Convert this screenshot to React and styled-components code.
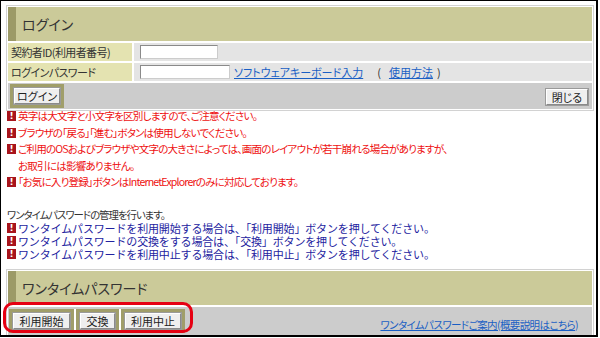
import React from 'react';
import styled, { createGlobalStyle } from 'styled-components';

const GlobalStyle = createGlobalStyle`
  html, body {
    margin: 0;
    padding: 0;
    background: #fff;
  }
  body {
    font-family: "Noto Sans CJK JP", "DejaVu Sans", sans-serif;
    color: #333;
  }
`;

const Frame = styled.div`
  width: 598px;
  height: 337px;
  box-sizing: border-box;
  border: 1px solid #000;
  border-right-width: 2px;
  border-bottom-width: 2px;
  padding: 4px 2px 0 5px;
  position: relative;
  overflow: hidden;
`;

const Panel = styled.div`
  border: 1px solid #d2d2d2;
  padding: 1px;
  display: flex;
  flex-direction: column;
  gap: 2px;
  background: #fff;
`;

const Header = styled.div`
  height: ${p => p.$h}px;
  background: #cbca99;
  border-left: 8px solid #9c9a67;
  display: flex;
  align-items: center;
  padding-left: 6px;
  font-size: 14px;
  font-feature-settings: "palt";
  color: #333;
`;

const FormGrid = styled.div`
  display: grid;
  grid-template-columns: 124px 1fr;
  grid-auto-rows: 18px;
  gap: 2px;
`;

const Label = styled.div`
  background: #e4e3b1;
  display: flex;
  align-items: center;
  padding-left: 3px;
  font-size: 11px;
  letter-spacing: -0.6px;
  font-feature-settings: "palt";
  color: #333;
`;

const Value = styled.div`
  background: #e4e4e4;
  display: flex;
  align-items: center;
  padding-left: 6px;
  font-size: 11px;
  color: #333;
`;

const Input = styled.div`
  width: ${p => p.$w}px;
  height: 14px;
  box-sizing: border-box;
  background: #fff;
  border: 1px solid #8a8a8a;
  border-right-color: #ccc;
  border-bottom-color: #ccc;
`;

const Link = styled.a`
  color: #1a5fc4;
  text-decoration: underline;
  font-size: 11px;
  font-feature-settings: "palt";
  cursor: pointer;
`;

const Paren = styled.span`
  margin: ${p => p.$m};
`;

const ButtonRow = styled.div`
  background: #cccccc;
  height: ${p => p.$h}px;
  box-sizing: border-box;
  display: flex;
  align-items: flex-start;
  justify-content: space-between;
  padding: ${p => p.$pad};
`;

const ButtonGroup = styled.div`
  display: flex;
  gap: 2px;
  background: #fff;
`;

const OliveCell = styled.div`
  background: #a09e6a;
  padding: 4px;
  display: flex;
`;

const Button = styled.button`
  display: block;
  height: 16px;
  width: ${p => p.$w}px;
  box-sizing: border-box;
  padding: 0;
  margin: 0;
  background: #efefef;
  border: 1px solid #fff;
  border-right-color: #8a8a8a;
  border-bottom-color: #8a8a8a;
  outline: 1px solid #9a9a9a;
  font-family: "Noto Sans CJK JP", sans-serif;
  font-size: 11px;
  line-height: 14px;
  color: #222;
  font-feature-settings: "palt";
`;

const CloseWrap = styled.div`
  display: flex;
  padding: 5px 4px 0 0;
`;

const Notes = styled.div`
  margin-top: -3px;
  padding-left: 1px;
  font-size: 10.6px;
  line-height: 16.5px;
  letter-spacing: -0.85px;
  font-feature-settings: "palt";
  color: #ee1111;
`;

const Note = styled.div`
  display: flex;
  align-items: center;
  white-space: nowrap;
  padding-left: ${p => (p.$indent ? 11 : 0)}px;
`;

const Mark = styled.span`
  width: 9px;
  height: 10px;
  flex: none;
  background: #a8141c;
  color: #fff;
  font-family: "DejaVu Sans", sans-serif;
  font-weight: bold;
  font-size: 9px;
  line-height: 10px;
  letter-spacing: 0;
  text-align: center;
  margin-right: 2px;
`;

const Intro = styled.div`
  margin-top: 17px;
  padding-left: 1px;
  font-size: 10.4px;
  line-height: 14px;
  letter-spacing: -1px;
  font-feature-settings: "palt";
  color: #333;
`;

const Guides = styled.div`
  padding-left: 1px;
  font-size: 11px;
  line-height: 13px;
  letter-spacing: -0.15px;
  color: #2323a0;
  margin-bottom: 8px;
`;

const Highlight = styled.div`
  position: absolute;
  left: 2px;
  top: 301px;
  width: 190px;
  height: 31px;
  box-sizing: border-box;
  border: 3px solid #e60012;
  border-radius: 10px;
  pointer-events: none;
`;

const GuideLink = styled(Link)`
  font-size: 10.5px;
  letter-spacing: -0.6px;
  margin: 8px 14px 0 0;
`;

const notes = [
  '英字は大文字と小文字を区別しますので、ご注意ください。',
  'ブラウザの「戻る」「進む」ボタンは使用しないでください。',
  'ご利用のOSおよびブラウザや文字の大きさによっては、画面のレイアウトが若干崩れる場合がありますが、',
];

const guides = [
  'ワンタイムパスワードを利用開始する場合は、「利用開始」ボタンを押してください。',
  'ワンタイムパスワードの交換をする場合は、「交換」ボタンを押してください。',
  'ワンタイムパスワードを利用中止する場合は、「利用中止」ボタンを押してください。',
];

export default function App() {
  return (
    <>
      <GlobalStyle />
      <Frame>
        <Panel>
          <Header $h={34}>ログイン</Header>
          <FormGrid>
            <Label>契約者ID(利用者番号)</Label>
            <Value>
              <Input $w={78} />
            </Value>
            <Label>ログインパスワード</Label>
            <Value>
              <Input $w={90} />
              <Paren $m="0 0 0 4px" />
              <Link>ソフトウェアキーボード入力</Link>
              <Paren $m="0 8px 0 14px">(</Paren>
              <Link>使用方法</Link>
              <Paren $m="0 0 0 4px">)</Paren>
            </Value>
          </FormGrid>
          <ButtonRow $h={26} $pad="1px 0 0 2px">
            <OliveCell>
              <Button $w={46}>ログイン</Button>
            </OliveCell>
            <CloseWrap>
              <Button $w={42}>閉じる</Button>
            </CloseWrap>
          </ButtonRow>
        </Panel>

        <Notes>
          {notes.map(t => (
            <Note key={t}>
              <Mark>!</Mark>
              {t}
            </Note>
          ))}
          <Note $indent>お取引には影響ありません。</Note>
          <Note>
            <Mark>!</Mark>
            「お気に入り登録」ボタンはInternetExplorerのみに対応しております。
          </Note>
        </Notes>

        <Intro>ワンタイムパスワードの管理を行います。</Intro>
        <Guides>
          {guides.map(t => (
            <Note key={t}>
              <Mark>!</Mark>
              {t}
            </Note>
          ))}
        </Guides>

        <Panel>
          <Header $h={34}>ワンタイムパスワード</Header>
          <ButtonRow $h={28} $pad="2px 0 0 1px">
            <ButtonGroup>
              <OliveCell>
                <Button $w={57}>利用開始</Button>
              </OliveCell>
              <OliveCell>
                <Button $w={35}>交換</Button>
              </OliveCell>
              <OliveCell>
                <Button $w={56}>利用中止</Button>
              </OliveCell>
            </ButtonGroup>
            <GuideLink>ワンタイムパスワードご案内(概要説明はこちら)</GuideLink>
          </ButtonRow>
        </Panel>
        <Highlight />
      </Frame>
    </>
  );
}
